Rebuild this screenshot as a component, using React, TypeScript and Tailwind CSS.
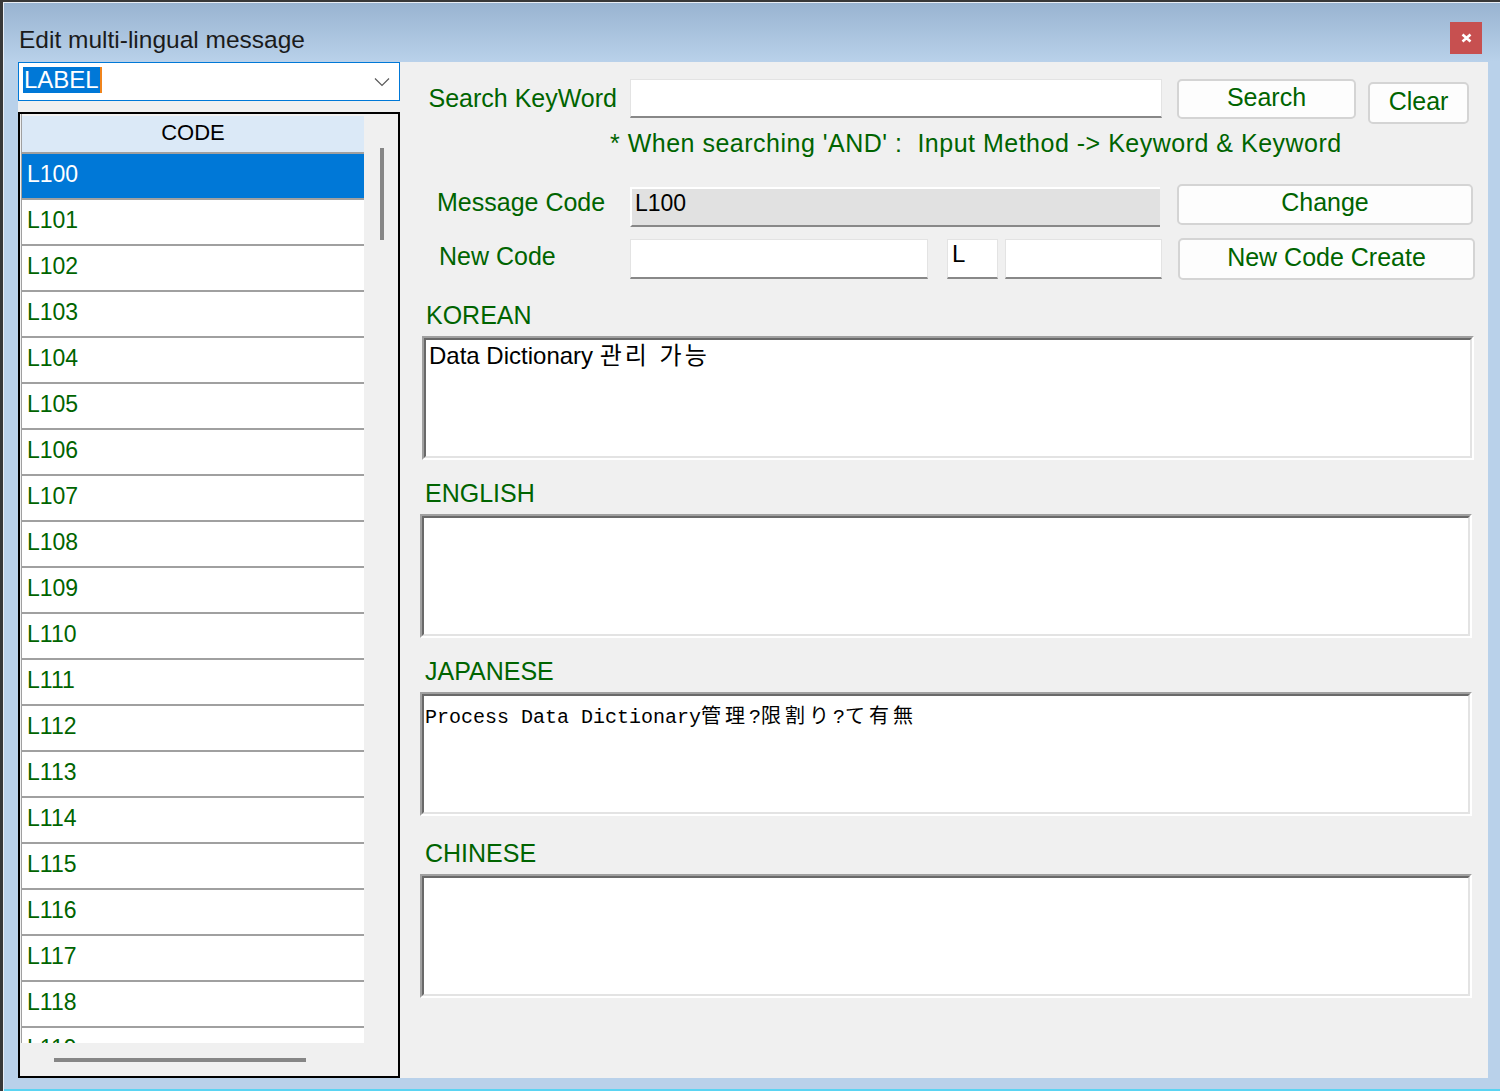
import React from "react";

const green = "text-[#006400]";

const codes = Array.from({ length: 20 }, (_, i) => `L${100 + i}`);

function WinButton({ label, className }: { label: string; className: string }) {
  return (
    <div
      className={`flex items-center justify-center rounded-[5px] border-2 border-[#d4d4d4] bg-[#fdfdfd] pb-[3px] text-[25px] ${green} ${className}`}
    >
      {label}
    </div>
  );
}

function TextBox({ className, children }: { className: string; children?: React.ReactNode }) {
  return (
    <div
      className={`flex items-center border border-[#e3e3e3] border-b-2 border-b-[#888888] bg-white pb-[10px] text-[24px] text-black ${className}`}
    >
      {children}
    </div>
  );
}

function MemoBox({ className, children }: { className: string; children?: React.ReactNode }) {
  return (
    <div
      className={`h-[124px] w-[1052px] border-2 border-t-[#a0a0a0] border-l-[#a0a0a0] border-r-white border-b-white ${className}`}
    >
      <div className="h-full w-full border-2 border-t-[#696969] border-l-[#696969] border-r-[#e3e3e3] border-b-[#e3e3e3] bg-white">
        {children}
      </div>
    </div>
  );
}

function SectionLabel({ text, className }: { text: string; className: string }) {
  return (
    <div className={`flex h-[30px] items-center pl-[25px] text-[25px] leading-none ${green} ${className}`}>
      {text}
    </div>
  );
}

export default function App() {
  return (
    <div className="h-[1091px] w-[1500px] overflow-hidden border-l-[3px] border-t-2 border-[#383838] bg-[#b9d1ea] font-['Liberation_Sans','Noto_Sans_CJK_KR',sans-serif]">
      <div className="flex h-full flex-col border-l border-t border-[#e9eef5]">
        {/* title bar */}
        <div className="flex h-[59px] shrink-0 items-start justify-between bg-gradient-to-b from-[#99b4d1] to-[#b9d1ea]">
          <div className="pl-[15px] pt-[22px] text-[24.5px] leading-[30px] text-[#1b1b1b]">
            Edit multi-lingual message
          </div>
          <div className="mr-[18px] mt-[19px] flex h-[32px] w-[32px] items-center justify-center bg-[#c75050]">
            <svg width="11" height="10" viewBox="0 0 11 10">
              <path d="M1.5 1.5 L9.5 8.5 M9.5 1.5 L1.5 8.5" stroke="white" strokeWidth="2.6" />
            </svg>
          </div>
        </div>

        {/* client area */}
        <div className="ml-[14px] flex h-[1016px] w-[1470px] shrink-0 bg-[#f0f0f0]">
          {/* left column */}
          <div className="flex w-[382px] flex-col">
            <div className="flex h-[39px] items-center justify-between border border-[#0078d7] bg-white pb-[4px] pl-[4px] pr-[9px]">
              <div className="flex items-center">
                <span className="bg-[#0078d7] px-[1px] text-[24px] leading-[26px] text-white">LABEL</span>
                <span className="h-[26px] w-[2px] bg-[#f0841c]" />
              </div>
              <svg width="16" height="10" viewBox="0 0 16 10" className="mt-[4px]">
                <path d="M1 1.5 L8 8.5 L15 1.5" stroke="#5a5a5a" strokeWidth="1.2" fill="none" />
              </svg>
            </div>

            <div className="mt-[11px] flex h-[966px] flex-col border-2 border-black">
              <div className="flex h-[929px]">
                <div className="ml-[1px] w-[343px] overflow-hidden border-l border-[#a0a0a0]">
                  <div className="pt-[2px]">
                    <div className="flex h-[36px] items-center justify-center bg-[#dbe9f7] pb-[3px] text-[22px] text-black">
                      CODE
                    </div>
                  </div>
                  {codes.map((c, i) => (
                    <div
                      key={c}
                      className={`flex h-[46px] items-center border-t-2 border-[#a0a0a0] pb-[4px] pl-[5px] text-[23px] ${
                        i === 0 ? "bg-[#0078d7] text-white" : `bg-white ${green}`
                      }`}
                    >
                      {c}
                    </div>
                  ))}
                </div>
                <div className="flex-1">
                  <div className="ml-[16px] mt-[34px] h-[92px] w-[4px] bg-[#868686]" />
                </div>
              </div>
              <div className="flex-1">
                <div className="ml-[34px] mt-[15px] h-[4px] w-[252px] bg-[#868686]" />
              </div>
            </div>
          </div>

          {/* right column */}
          <div className="flex flex-1 flex-col">
            {/* search row */}
            <div className="mt-[17px] flex items-start">
              <div className={`flex h-[39px] w-[230px] items-center justify-end pr-[13px] text-[25px] ${green}`}>
                Search KeyWord
              </div>
              <TextBox className="h-[39px] w-[532px]" />
              <WinButton label="Search" className="ml-[15px] h-[40px] w-[179px]" />
              <WinButton label="Clear" className="ml-[12px] mt-[3px] h-[42px] w-[101px]" />
            </div>
            <div className={`mt-[5px] h-[28px] whitespace-pre pl-[210px] text-[25px] leading-[28px] tracking-[0.5px] ${green}`}>
              {"* When searching 'AND' :  Input Method -> Keyword & Keyword"}
            </div>

            {/* message code row */}
            <div className="mt-[27px] flex items-start">
              <div className={`flex h-[37px] w-[230px] items-center pl-[37px] text-[25px] ${green}`}>
                Message Code
              </div>
              <div className="mt-[3px] flex h-[40px] w-[530px] items-center border-l-2 border-t-2 border-white border-b-2 border-b-[#888888] bg-[#e1e1e1] pb-[8px] pl-[3px] text-[23px] text-black">
                L100
              </div>
              <WinButton label="Change" className="ml-[17px] h-[41px] w-[296px]" />
            </div>

            {/* new code row */}
            <div className="mt-[11px] flex items-start">
              <div className={`flex h-[37px] w-[230px] items-center pl-[39px] text-[25px] ${green}`}>
                New Code
              </div>
              <TextBox className="mt-[1px] h-[40px] w-[298px]" />
              <TextBox className="ml-[19px] mt-[1px] h-[40px] w-[51px] pl-[4px]">L</TextBox>
              <TextBox className="ml-[7px] mt-[1px] h-[40px] w-[157px]" />
              <WinButton label="New Code Create" className="ml-[16px] h-[42px] w-[297px]" />
            </div>

            {/* language sections */}
            <SectionLabel text="KOREAN" className="mt-[20px] pl-[26px]" />
            <MemoBox className="ml-[22px] mt-[6px]">
              <div className="pl-[3px] pt-[3px] text-[24px] leading-[26px] text-black">
                Data Dictionary <span className="tracking-[3px]">관리 가능</span>
              </div>
            </MemoBox>

            <SectionLabel text="ENGLISH" className="mt-[18px]" />
            <MemoBox className="ml-[20px] mt-[6px]" />

            <SectionLabel text="JAPANESE" className="mt-[18px]" />
            <MemoBox className="ml-[20px] mt-[6px]">
              <div className="whitespace-pre pl-[1px] pt-[8px] font-['Liberation_Mono','Noto_Sans_CJK_JP',monospace] text-[20px] leading-[28px] text-black">
                Process Data Dictionary<span className="tracking-[4px]">管理</span>?
                <span className="tracking-[4px]">限割り</span>?<span className="tracking-[4px]">て有無</span>
              </div>
            </MemoBox>

            <SectionLabel text="CHINESE" className="mt-[22px]" />
            <MemoBox className="ml-[20px] mt-[6px]" />
          </div>
        </div>

        <div className="flex-1" />
        <div className="h-[2px] w-full bg-[#5ad4f2]" />
      </div>
    </div>
  );
}
